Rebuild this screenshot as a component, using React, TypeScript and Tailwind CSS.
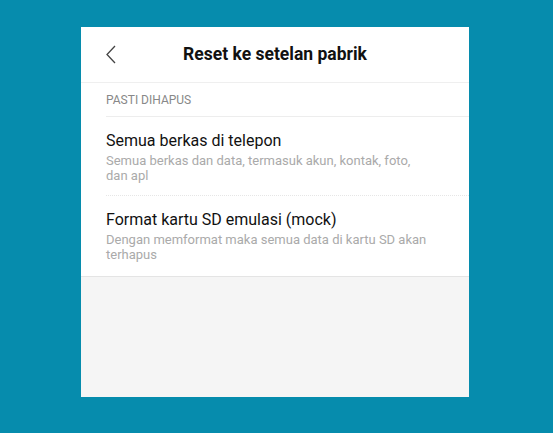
import React from 'react'

const items = [
  {
    title: 'Semua berkas di telepon',
    desc: 'Semua berkas dan data, termasuk akun, kontak, foto, dan apl',
  },
  {
    title: 'Format kartu SD emulasi (mock)',
    desc: 'Dengan memformat maka semua data di kartu SD akan terhapus',
  },
]

export default function App() {
  return (
    <div className="h-[433px] w-[553px] bg-[#068cad] pt-[27px] pl-[81px] font-['Roboto',sans-serif]">
      <div className="flex h-[370px] w-[388px] flex-col bg-white">
        {/* Header */}
        <div className="relative flex h-[56px] shrink-0 items-center justify-center border-b border-[#efefef]">
          <button className="absolute left-[24px] top-[18px] text-[#333]">
            <svg width="12" height="19" viewBox="0 0 12 19" fill="none">
              <path d="M10 1L2 9.5L10 18" stroke="#444" strokeWidth="1.3" />
            </svg>
          </button>
          <h1 className="text-[17.5px] font-bold text-[#111]">Reset ke setelan pabrik</h1>
        </div>

        {/* Section label */}
        <div className="ml-[25px] flex h-[34px] items-center border-b border-[#ededed]">
          <span className="text-[12px] text-[#888]">PASTI DIHAPUS</span>
        </div>

        {items.map((item, i) => (
          <div
            key={item.title}
            className={
              i === 0
                ? 'ml-[25px] h-[79px] border-b border-dotted border-[#e6e6e6] pt-[14px] pr-[40px]'
                : 'ml-[25px] h-[80px] pt-[14px] pr-[30px]'
            }
          >
            <div className="text-[16px] leading-[20px] text-[#111]">{item.title}</div>
            <div className="mt-[2px] text-[13px] leading-[15px] text-[#aaa]">{item.desc}</div>
          </div>
        ))}

        {/* Empty area */}
        <div className="flex-1 border-t border-[#e4e4e4] bg-[#f5f5f5]" />
      </div>
    </div>
  )
}
